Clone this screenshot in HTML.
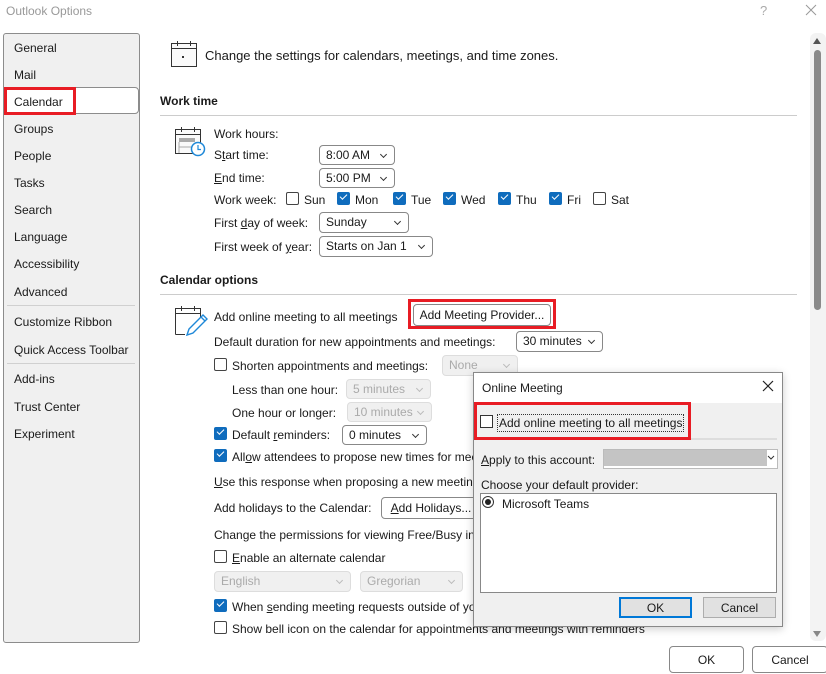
<!DOCTYPE html>
<html><head><meta charset="utf-8"><style>
*{box-sizing:border-box;margin:0;padding:0}
body{width:826px;height:674px;background:#fff;position:relative;overflow:hidden;font-family:"Liberation Sans",sans-serif;font-size:12px;color:#1a1a1a}
.a{position:absolute}
.t{position:absolute;line-height:16px;white-space:nowrap;margin-top:1px}
.cb{position:absolute;width:13px;height:13px;border:1px solid #444;border-radius:2px;background:#fff}
.ck{position:absolute;width:13px;height:13px;border-radius:2px;background:#0f6cbd}
.ck:after{content:"";position:absolute;left:3px;top:2px;width:6px;height:3px;border-left:1.5px solid #fff;border-bottom:1.5px solid #fff;transform:rotate(-45deg)}
.dd{position:absolute;border:1px solid #888;border-radius:4px;background:#fff;line-height:19px;padding-left:6px;white-space:nowrap}
.dd:after{content:"";position:absolute;right:8px;top:6px;width:4px;height:4px;border-right:1px solid #333;border-bottom:1px solid #333;transform:rotate(45deg)}
.dis{background:#f0f0f0;border-color:#ddd;color:#aaa}
.dis:after{border-color:#bbb}
.btn{position:absolute;border:1px solid #888;border-radius:4px;background:#fff;text-align:center;white-space:nowrap}
.nav{position:absolute;left:14px;line-height:16px;margin-top:1px}
u{text-decoration:underline}
</style></head><body>
<div class="t" style="left:6px;top:2px;color:#999">Outlook Options</div>
<div class="t" style="left:760px;top:2px;color:#aaa;font-size:13px">?</div>
<svg class="a" style="left:805px;top:4px" width="12" height="12"><path d="M1 1L11 11M11 1L1 11" stroke="#999" stroke-width="1"/></svg>

<div class="a" style="left:3px;top:33px;width:137px;height:610px;background:#f0f0f0;border:1px solid #8c8c8c;border-radius:3px"></div>
<div class="a" style="left:4px;top:87px;width:135px;height:27px;background:#fff;border:1px solid #8c8c8c;border-radius:4px"></div>
<div class="a" style="left:4px;top:87px;width:72px;height:28px;border:3px solid #e81c24"></div>
<div class="nav" style="top:39px">General</div>
<div class="nav" style="top:66px">Mail</div>
<div class="nav" style="top:93px">Calendar</div>
<div class="nav" style="top:120px">Groups</div>
<div class="nav" style="top:147px">People</div>
<div class="nav" style="top:174px">Tasks</div>
<div class="nav" style="top:201px">Search</div>
<div class="nav" style="top:228px">Language</div>
<div class="nav" style="top:255px">Accessibility</div>
<div class="nav" style="top:283px">Advanced</div>
<div class="a" style="left:7px;top:305px;width:128px;height:1px;background:#d0d0d0"></div>
<div class="nav" style="top:313px">Customize Ribbon</div>
<div class="nav" style="top:341px">Quick Access Toolbar</div>
<div class="a" style="left:7px;top:363px;width:128px;height:1px;background:#d0d0d0"></div>
<div class="nav" style="top:370px">Add-ins</div>
<div class="nav" style="top:398px">Trust Center</div>
<div class="nav" style="top:425px">Experiment</div>

<div class="a" style="left:810px;top:33px;width:16px;height:608px;background:#f3f3f3;border-radius:6px"></div>
<svg class="a" style="left:812px;top:37px" width="10" height="8"><path d="M1 7L5 1L9 7Z" fill="#555"/></svg>
<div class="a" style="left:814px;top:50px;width:7px;height:260px;background:#8a8a8a;border-radius:4px"></div>
<svg class="a" style="left:812px;top:630px" width="10" height="8"><path d="M1 1L9 1L5 7Z" fill="#888"/></svg>

<svg class="a" style="left:168px;top:39px" width="32" height="30"><rect x="3.5" y="4.5" width="25" height="23" fill="#fafafa" stroke="#333"/><path d="M3.5 9.5H28.5M9.5 2V7M22.5 2V7" stroke="#333"/><rect x="14" y="17" width="2" height="2" fill="#333"/></svg>
<div class="t" style="left:205px;top:47px;font-size:13px">Change the settings for calendars, meetings, and time zones.</div>
<div class="t" style="left:160px;top:92px;font-weight:bold">Work time</div>
<div class="a" style="left:160px;top:115px;width:637px;height:1px;background:#ccc"></div>
<svg class="a" style="left:173px;top:125px" width="34" height="32"><rect x="2.5" y="4.5" width="25" height="24" fill="#fafafa" stroke="#333"/><path d="M2.5 9.5H27.5M8.5 2V7M21.5 2V7" stroke="#333"/><rect x="6" y="13" width="16" height="4" fill="#aaa"/><path d="M6 17V28M6 22H27" stroke="#aaa"/><circle cx="25" cy="24" r="6.5" fill="#fff" stroke="#1e88d8" stroke-width="1.5"/><path d="M25 20V24.5H28" stroke="#1e88d8" stroke-width="1.2" fill="none"/></svg>
<div class="t" style="left:214px;top:125px">Work hours:</div>
<div class="t" style="left:214px;top:146px">S<u>t</u>art time:</div>
<div class="dd" style="left:319px;top:145px;width:76px;height:20px">8:00 AM</div>
<div class="t" style="left:214px;top:169px"><u>E</u>nd time:</div>
<div class="dd" style="left:319px;top:168px;width:76px;height:20px">5:00 PM</div>
<div class="t" style="left:214px;top:191px">Work week:</div>
<div class="cb" style="left:286px;top:192px"></div><div class="t" style="left:304px;top:191px">Sun</div>
<div class="ck" style="left:337px;top:192px"></div><div class="t" style="left:355px;top:191px">Mon</div>
<div class="ck" style="left:393px;top:192px"></div><div class="t" style="left:411px;top:191px">Tue</div>
<div class="ck" style="left:443px;top:192px"></div><div class="t" style="left:461px;top:191px">Wed</div>
<div class="ck" style="left:498px;top:192px"></div><div class="t" style="left:516px;top:191px">Thu</div>
<div class="ck" style="left:549px;top:192px"></div><div class="t" style="left:567px;top:191px">Fri</div>
<div class="cb" style="left:593px;top:192px"></div><div class="t" style="left:611px;top:191px">Sat</div>
<div class="t" style="left:214px;top:214px">First <u>d</u>ay of week:</div>
<div class="dd" style="left:319px;top:212px;width:90px;height:21px">Sunday</div>
<div class="t" style="left:214px;top:238px">First week of <u>y</u>ear:</div>
<div class="dd" style="left:319px;top:236px;width:114px;height:21px">Starts on Jan 1</div>

<div class="t" style="left:160px;top:271px;font-weight:bold">Calendar options</div>
<div class="a" style="left:160px;top:294px;width:637px;height:1px;background:#ccc"></div>
<svg class="a" style="left:173px;top:304px" width="36" height="34"><path d="M2.5 30.5V4.5H27.5V14M2.5 9.5H27.5M8.5 2V7M21.5 2V7M2.5 30.5H12" stroke="#333" fill="none"/><path d="M14 31L16 25L30 11L34 15L20 29Z M28 13L32 17" stroke="#1e88d8" stroke-width="1.4" fill="#fff"/></svg>
<div class="t" style="left:214px;top:308px">Add online meeting to all meetings</div>
<div class="btn" style="left:413px;top:304px;width:138px;height:22px;line-height:21px">Add Meeting Provider...</div>
<div class="a" style="left:408px;top:299px;width:148px;height:30px;border:3px solid #e81c24"></div>
<div class="t" style="left:214px;top:333px">Default duration for new appointments and meetings:</div>
<div class="dd" style="left:516px;top:331px;width:87px;height:21px">30 minutes</div>
<div class="cb" style="left:214px;top:358px"></div><div class="t" style="left:232px;top:357px">Shorten appointments and meetings:</div>
<div class="dd dis" style="left:442px;top:355px;width:76px;height:21px">None</div>
<div class="t" style="left:232px;top:381px">Less than one hour:</div>
<div class="dd dis" style="left:346px;top:379px;width:85px;height:20px">5 minutes</div>
<div class="t" style="left:232px;top:404px">One hour or longer:</div>
<div class="dd dis" style="left:347px;top:402px;width:85px;height:20px">10 minutes</div>
<div class="ck" style="left:214px;top:427px"></div><div class="t" style="left:232px;top:426px">Default <u>r</u>eminders:</div>
<div class="dd" style="left:342px;top:425px;width:85px;height:20px">0 minutes</div>
<div class="ck" style="left:214px;top:449px"></div><div class="t" style="left:232px;top:448px">All<u>o</u>w attendees to propose new times for meetings</div>
<div class="t" style="left:214px;top:473px"><u>U</u>se this response when proposing a new meeting time:</div>
<div class="t" style="left:214px;top:499px">Add holidays to the Calendar:</div>
<div class="btn" style="left:381px;top:497px;width:100px;height:22px;line-height:21px"><u>A</u>dd Holidays...</div>
<div class="t" style="left:214px;top:526px">Change the permissions for viewing Free/Busy information:</div>
<div class="cb" style="left:214px;top:550px"></div><div class="t" style="left:232px;top:549px"><u>E</u>nable an alternate calendar</div>
<div class="dd dis" style="left:214px;top:571px;width:137px;height:21px">English</div>
<div class="dd dis" style="left:360px;top:571px;width:103px;height:21px">Gregorian</div>
<div class="ck" style="left:214px;top:599px"></div><div class="t" style="left:232px;top:598px">When <u>s</u>ending meeting requests outside of your organization, use iCalendar format</div>
<div class="cb" style="left:214px;top:621px"></div><div class="t" style="left:232px;top:620px">Show bell icon on the calendar for appointments and meetings with reminders</div>

<div class="btn" style="left:669px;top:646px;width:75px;height:27px;line-height:26px">OK</div>
<div class="btn" style="left:752px;top:646px;width:76px;height:27px;line-height:26px">Cancel</div>

<div class="a" style="left:473px;top:372px;width:310px;height:255px;background:#f0f0f0;border:1px solid #888;box-shadow:0 2px 8px rgba(0,0,0,.2)"></div>
<div class="a" style="left:474px;top:373px;width:308px;height:30px;background:#fff"></div>
<div class="t" style="left:482px;top:379px">Online Meeting</div>
<svg class="a" style="left:762px;top:380px" width="12" height="12"><path d="M1 1L11 11M11 1L1 11" stroke="#222" stroke-width="1.2"/></svg>
<div class="a" style="left:691px;top:438px;width:86px;height:2px;background:#ddd"></div>
<div class="cb" style="left:480px;top:415px;border-radius:0;border-color:#333"></div>
<div class="t" style="left:498px;top:414px;outline:1px dotted #333;padding:0 1px">Add online meeting to all meetings</div>
<div class="a" style="left:474px;top:402px;width:217px;height:38px;border:3px solid #e81c24"></div>
<div class="t" style="left:481px;top:451px"><u>A</u>pply to this account:</div>
<div class="a" style="left:603px;top:449px;width:175px;height:20px;background:#fff;border:1px solid #bbb"></div>
<div class="a" style="left:604px;top:450px;width:163px;height:16px;background:#c4c4c4"></div>
<svg class="a" style="left:767px;top:455px" width="8" height="6"><path d="M1 1L4 4L7 1" stroke="#333" fill="none"/></svg>
<div class="t" style="left:481px;top:476px">Choose your default provider:</div>
<div class="a" style="left:480px;top:493px;width:297px;height:100px;background:#fff;border:1px solid #888"></div>
<div class="a" style="left:482px;top:496px;width:12px;height:12px;border:1px solid #333;border-radius:50%;background:#fff"></div>
<div class="a" style="left:485px;top:499px;width:6px;height:6px;border-radius:50%;background:#222"></div>
<div class="t" style="left:502px;top:495px">Microsoft Teams</div>
<div class="a" style="left:619px;top:597px;width:73px;height:21px;background:#e1e1e1;border:2px solid #0078d7;text-align:center;line-height:18px">OK</div>
<div class="a" style="left:703px;top:597px;width:73px;height:21px;background:#e1e1e1;border:1px solid #adadad;text-align:center;line-height:20px">Cancel</div>
</body></html>
